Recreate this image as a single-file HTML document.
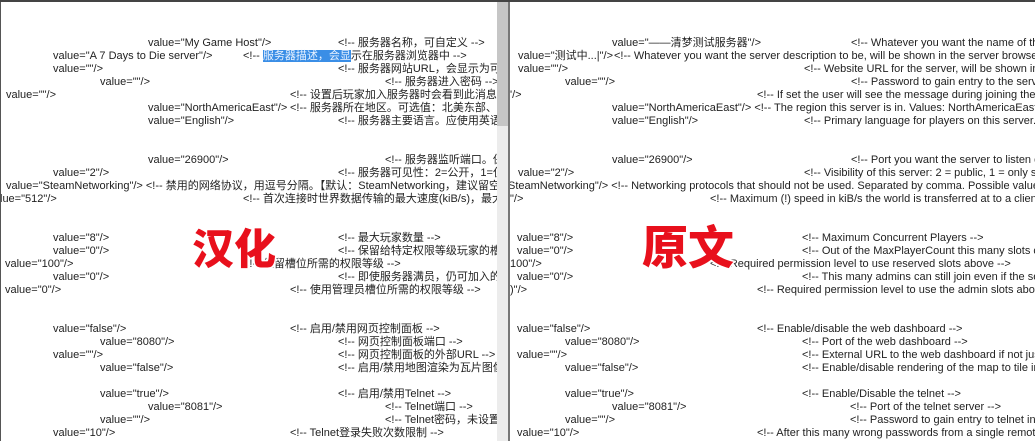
<!DOCTYPE html>
<html><head><meta charset="utf-8"><style>
*{margin:0;padding:0}
body{width:1035px;height:441px;overflow:hidden;background:#fff;position:relative;font-family:"Liberation Sans","Noto Sans CJK SC",sans-serif;font-size:11px;color:#222}
.pane{position:absolute;top:0;height:441px;overflow:hidden;background:#fff}
.l{position:absolute;white-space:nowrap;line-height:13px}
.sel{background:#3a8ee6;color:#e8f2ff}
.big{position:absolute;font-family:"Noto Sans CJK SC","WenQuanYi Zen Hei",sans-serif;font-weight:900;color:#e8101c;-webkit-text-stroke:3px #fff;paint-order:stroke fill;text-shadow:0 0 2px #fff,0 0 3px #fff}
</style></head><body>
<div style="position:absolute;left:0;top:0;width:1035px;height:2px;background:#444"></div>
<div class="pane" style="left:1px;top:2px;width:496px;">
<div style="position:absolute;left:0;top:2px;width:496px;height:441px">
<div class="l" style="top:33px;left:147px">value="My Game Host"/></div><div class="l" style="top:33px;left:337px">&lt;!-- 服务器名称，可自定义 --&gt;</div>
<div class="l" style="top:46px;left:52px">value="A 7 Days to Die server"/></div><div class="l" style="top:46px;left:242px">&lt;!-- <span class="sel">服务器描述，会显</span>示在服务器浏览器中 --&gt;</div>
<div class="l" style="top:59px;left:52px">value=""/></div><div class="l" style="top:59px;left:337px">&lt;!-- 服务器网站URL，会显示为可点击链接 --&gt;</div>
<div class="l" style="top:72px;left:99px">value=""/></div><div class="l" style="top:72px;left:384px">&lt;!-- 服务器进入密码 --&gt;</div>
<div class="l" style="top:85px;left:5px">value=""/></div><div class="l" style="top:85px;left:289px">&lt;!-- 设置后玩家加入服务器时会看到此消息并需确认 --&gt;</div>
<div class="l" style="top:98px;left:147px">value="NorthAmericaEast"/></div><div class="l" style="top:98px;left:289px">&lt;!-- 服务器所在地区。可选值：北美东部、北美西部 --&gt;</div>
<div class="l" style="top:111px;left:147px">value="English"/></div><div class="l" style="top:111px;left:337px">&lt;!-- 服务器主要语言。应使用英语说明 --&gt;</div>
<div class="l" style="top:150px;left:147px">value="26900"/></div><div class="l" style="top:150px;left:384px">&lt;!-- 服务器监听端口。保留 --&gt;</div>
<div class="l" style="top:163px;left:52px">value="2"/></div><div class="l" style="top:163px;left:337px">&lt;!-- 服务器可见性：2=公开，1=仅好友 --&gt;</div>
<div class="l" style="top:176px;left:5px">value="SteamNetworking"/> &lt;!-- 禁用的网络协议，用逗号分隔。【默认：SteamNetworking，建议留空】 --&gt;</div>
<div class="l" style="top:189px;left:-1px">lue="512"/></div><div class="l" style="top:189px;left:242px">&lt;!-- 首次连接时世界数据传输的最大速度(kiB/s)，最大值 --&gt;</div>

<div class="l" style="top:228px;left:52px">value="8"/></div><div class="l" style="top:228px;left:337px">&lt;!-- 最大玩家数量 --&gt;</div>
<div class="l" style="top:241px;left:52px">value="0"/></div><div class="l" style="top:241px;left:337px">&lt;!-- 保留给特定权限等级玩家的槽位数量 --&gt;</div>
<div class="l" style="top:254px;left:4px">value="100"/></div><div class="l" style="top:254px;left:242px">&lt;!-- 保留槽位所需的权限等级 --&gt;</div>
<div class="l" style="top:267px;left:52px">value="0"/></div><div class="l" style="top:267px;left:337px">&lt;!-- 即使服务器满员，仍可加入的管理员数量 --&gt;</div>
<div class="l" style="top:280px;left:4px">value="0"/></div><div class="l" style="top:280px;left:289px">&lt;!-- 使用管理员槽位所需的权限等级 --&gt;</div>
<div class="l" style="top:319px;left:52px">value="false"/></div><div class="l" style="top:319px;left:289px">&lt;!-- 启用/禁用网页控制面板 --&gt;</div>
<div class="l" style="top:332px;left:99px">value="8080"/></div><div class="l" style="top:332px;left:337px">&lt;!-- 网页控制面板端口 --&gt;</div>
<div class="l" style="top:345px;left:52px">value=""/></div><div class="l" style="top:345px;left:337px">&lt;!-- 网页控制面板的外部URL --&gt;</div>
<div class="l" style="top:358px;left:99px">value="false"/></div><div class="l" style="top:358px;left:337px">&lt;!-- 启用/禁用地图渲染为瓦片图像 --&gt;</div>
<div class="l" style="top:384px;left:99px">value="true"/></div><div class="l" style="top:384px;left:337px">&lt;!-- 启用/禁用Telnet --&gt;</div>
<div class="l" style="top:397px;left:147px">value="8081"/></div><div class="l" style="top:397px;left:384px">&lt;!-- Telnet端口 --&gt;</div>
<div class="l" style="top:410px;left:99px">value=""/></div><div class="l" style="top:410px;left:384px">&lt;!-- Telnet密码，未设置则 --&gt;</div>
<div class="l" style="top:423px;left:52px">value="10"/></div><div class="l" style="top:423px;left:289px">&lt;!-- Telnet登录失败次数限制 --&gt;</div>
</div>
<div class="big" style="left:191px;top:220px;font-size:42px;line-height:50px">汉化</div>
</div>
<div style="position:absolute;left:0;top:2px;width:1px;height:439px;background:#555"></div>
<div style="position:absolute;left:497px;top:2px;width:11px;height:439px;background:#ececec"></div>
<div style="position:absolute;left:497px;top:2px;width:11px;height:124px;background:#c6c6c6"></div>
<div style="position:absolute;left:508px;top:2px;width:2px;height:439px;background:#777"></div>
<div class="pane" style="left:510px;top:2px;width:525px;">
<div style="position:absolute;left:0;top:2px;width:525px;height:441px">
<div class="l" style="top:33px;left:102px">value="——清梦测试服务器"/></div><div class="l" style="top:33px;left:341px">&lt;!-- Whatever you want the name of the server to be --&gt;</div>
<div class="l" style="top:46px;left:8px">value="测试中...|"/></div><div class="l" style="top:46px;left:104px">&lt;!-- Whatever you want the server description to be, will be shown in the server browser --&gt;</div>
<div class="l" style="top:59px;left:8px">value=""/></div><div class="l" style="top:59px;left:294px">&lt;!-- Website URL for the server, will be shown in the serverbrowser --&gt;</div>
<div class="l" style="top:72px;left:55px">value=""/></div><div class="l" style="top:72px;left:341px">&lt;!-- Password to gain entry to the server --&gt;</div>
<div class="l" style="top:85px;left:0px">'/></div><div class="l" style="top:85px;left:247px">&lt;!-- If set the user will see the message during joining the server --&gt;</div>
<div class="l" style="top:98px;left:102px">value="NorthAmericaEast"/> &lt;!-- The region this server is in. Values: NorthAmericaEast, --&gt;</div>
<div class="l" style="top:111px;left:102px">value="English"/></div><div class="l" style="top:111px;left:294px">&lt;!-- Primary language for players on this server. --&gt;</div>
<div class="l" style="top:150px;left:102px">value="26900"/></div><div class="l" style="top:150px;left:341px">&lt;!-- Port you want the server to listen on --&gt;</div>
<div class="l" style="top:163px;left:8px">value="2"/></div><div class="l" style="top:163px;left:294px">&lt;!-- Visibility of this server: 2 = public, 1 = only shown to friends --&gt;</div>
<div class="l" style="top:176px;left:-2px">SteamNetworking"/> &lt;!-- Networking protocols that should not be used. Separated by comma. Possible values --&gt;</div>
<div class="l" style="top:189px;left:0px">"/></div><div class="l" style="top:189px;left:200px">&lt;!-- Maximum (!) speed in kiB/s the world is transferred at to a client --&gt;</div>

<div class="l" style="top:228px;left:7px">value="8"/></div><div class="l" style="top:228px;left:292px">&lt;!-- Maximum Concurrent Players --&gt;</div>
<div class="l" style="top:241px;left:7px">value="0"/></div><div class="l" style="top:241px;left:292px">&lt;!-- Out of the MaxPlayerCount this many slots can only be used --&gt;</div>
<div class="l" style="top:254px;left:0px">100"/></div><div class="l" style="top:254px;left:200px">&lt;!-- Required permission level to use reserved slots above --&gt;</div>
<div class="l" style="top:267px;left:7px">value="0"/></div><div class="l" style="top:267px;left:292px">&lt;!-- This many admins can still join even if the server is full --&gt;</div>
<div class="l" style="top:280px;left:0px">)"/></div><div class="l" style="top:280px;left:247px">&lt;!-- Required permission level to use the admin slots above --&gt;</div>
<div class="l" style="top:319px;left:7px">value="false"/></div><div class="l" style="top:319px;left:247px">&lt;!-- Enable/disable the web dashboard --&gt;</div>
<div class="l" style="top:332px;left:55px">value="8080"/></div><div class="l" style="top:332px;left:292px">&lt;!-- Port of the web dashboard --&gt;</div>
<div class="l" style="top:345px;left:7px">value=""/></div><div class="l" style="top:345px;left:292px">&lt;!-- External URL to the web dashboard if not just using the public IP --&gt;</div>
<div class="l" style="top:358px;left:55px">value="false"/></div><div class="l" style="top:358px;left:292px">&lt;!-- Enable/disable rendering of the map to tile images --&gt;</div>
<div class="l" style="top:384px;left:55px">value="true"/></div><div class="l" style="top:384px;left:292px">&lt;!-- Enable/Disable the telnet --&gt;</div>
<div class="l" style="top:397px;left:102px">value="8081"/></div><div class="l" style="top:397px;left:340px">&lt;!-- Port of the telnet server --&gt;</div>
<div class="l" style="top:410px;left:55px">value=""/></div><div class="l" style="top:410px;left:340px">&lt;!-- Password to gain entry to telnet interface --&gt;</div>
<div class="l" style="top:423px;left:7px">value="10"/></div><div class="l" style="top:423px;left:247px">&lt;!-- After this many wrong passwords from a single remote client --&gt;</div>
</div>
<div class="big" style="left:132px;top:216px;font-size:46px;line-height:54px">原文</div>
</div>
</body></html>
